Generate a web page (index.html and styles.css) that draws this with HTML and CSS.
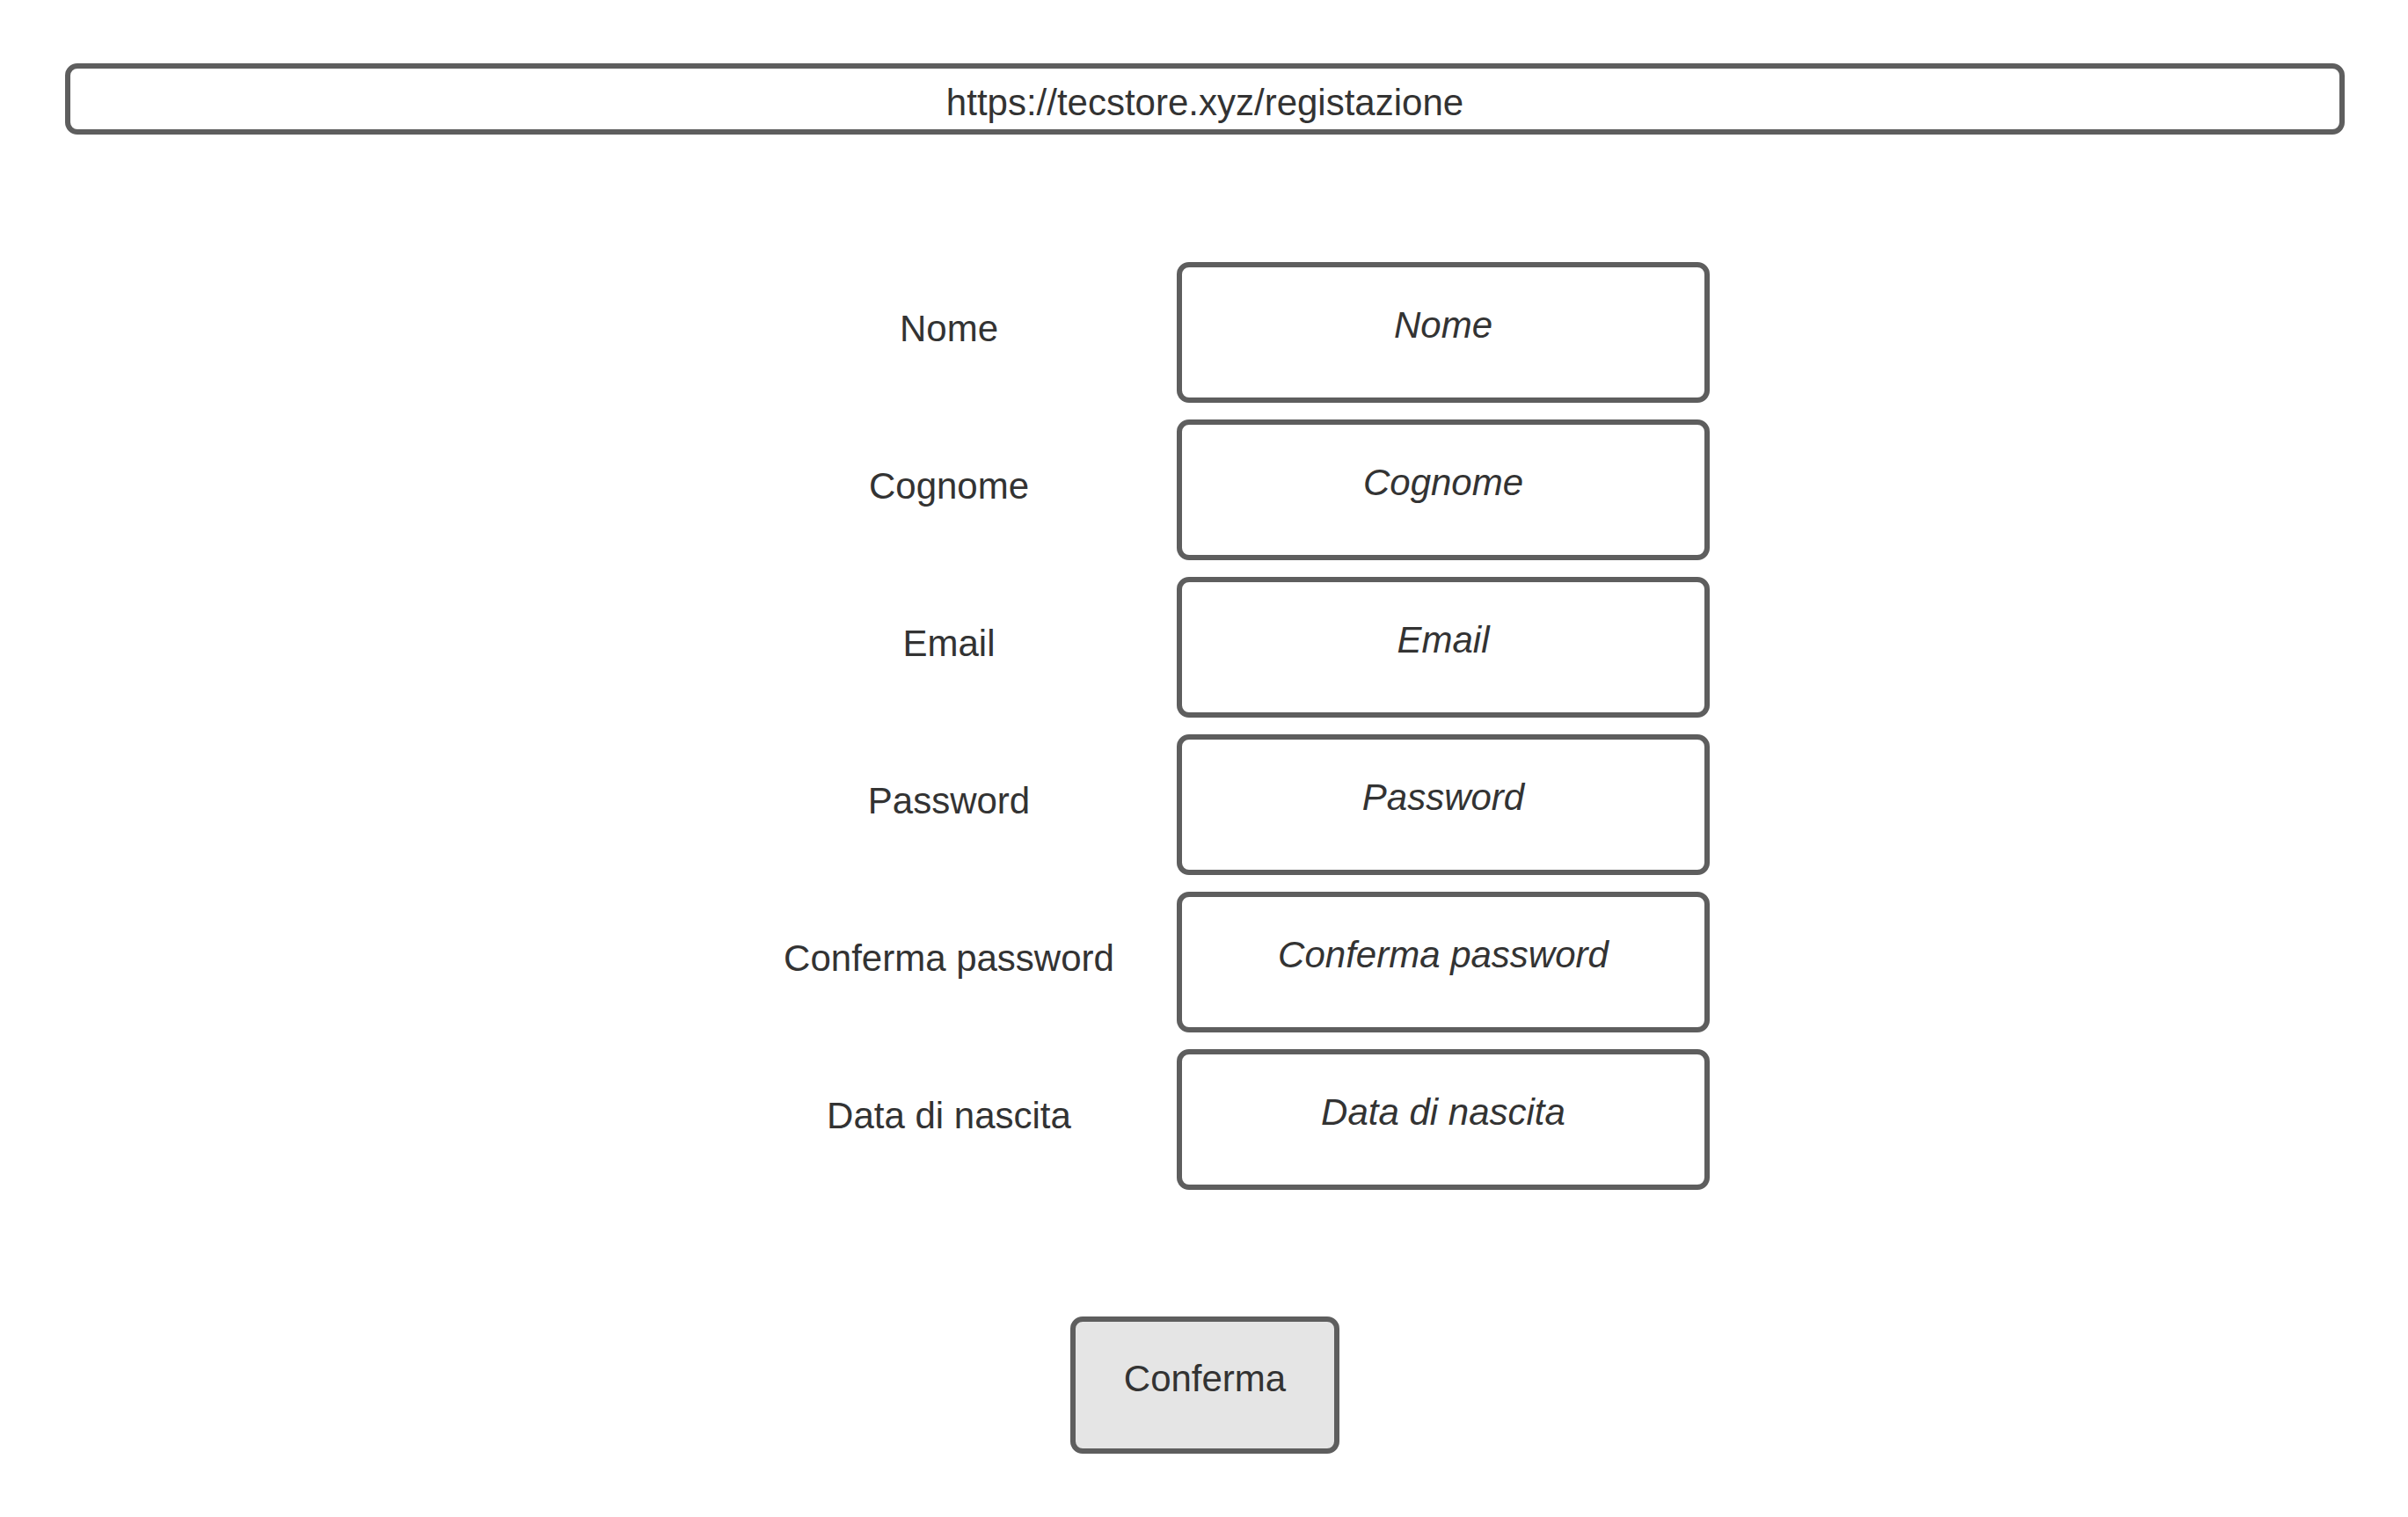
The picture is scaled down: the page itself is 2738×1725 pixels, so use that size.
FILE: index.html
```html
<!DOCTYPE html>
<html lang="it">
<head>
  <meta charset="utf-8">
  <meta name="viewport" content="width=device-width, initial-scale=1">
  <title>Registrazione</title>
  <link rel="stylesheet" href="styles.css">
</head>
<body>
  <header>
    <input class="box address" type="text" aria-label="Indirizzo" value="https://tecstore.xyz/registazione">
  </header>
  <main>
    <form class="form">
      <div class="fields">
        <label class="label" for="nome">Nome</label>
        <input class="box field" id="nome" type="text" placeholder="Nome">
        <label class="label" for="cognome">Cognome</label>
        <input class="box field" id="cognome" type="text" placeholder="Cognome">
        <label class="label" for="email">Email</label>
        <input class="box field" id="email" type="email" placeholder="Email">
        <label class="label" for="password">Password</label>
        <input class="box field" id="password" type="password" placeholder="Password">
        <label class="label" for="conferma">Conferma password</label>
        <input class="box field" id="conferma" type="password" placeholder="Conferma password">
        <label class="label" for="nascita">Data di nascita</label>
        <input class="box field" id="nascita" type="text" placeholder="Data di nascita">
      </div>
      <button class="box submit" type="submit">Conferma</button>
    </form>
  </main>
</body>
</html>
```
FILE: styles.css
```css
* {
  box-sizing: border-box;
}

body {
  margin: 0;
  padding: 72px 72px 72px 74px;
  background: #fff;
  color: #333;
  font-family: "Liberation Sans", Arial, sans-serif;
  font-size: 42px;
  line-height: 48px;
}

.box {
  border: 6px solid #5e5e5e;
  border-radius: 14px;
  background: #fff;
  color: inherit;
  font: inherit;
  text-align: center;
}

.address {
  display: block;
  width: 100%;
  height: 81px;
  padding: 9px 16px 0;
}

.form {
  display: flex;
  flex-direction: column;
  align-items: center;
  gap: 144px;
  margin-top: 145px;
}

.fields {
  display: grid;
  grid-template-columns: minmax(0, 518px) minmax(0, 606px);
  grid-auto-rows: 160px;
  row-gap: 19px;
  justify-content: center;
  width: 100%;
  padding-left: 24px;
}

.label {
  align-self: center;
  padding-bottom: 8px;
  text-align: center;
}

.field {
  width: 100%;
  padding: 0 16px 16px;
}

.field::placeholder {
  color: #333;
  font-style: italic;
  opacity: 1;
}

.submit {
  width: 306px;
  height: 156px;
  padding: 0 16px 14px;
  background: #e5e5e5;
}
```
